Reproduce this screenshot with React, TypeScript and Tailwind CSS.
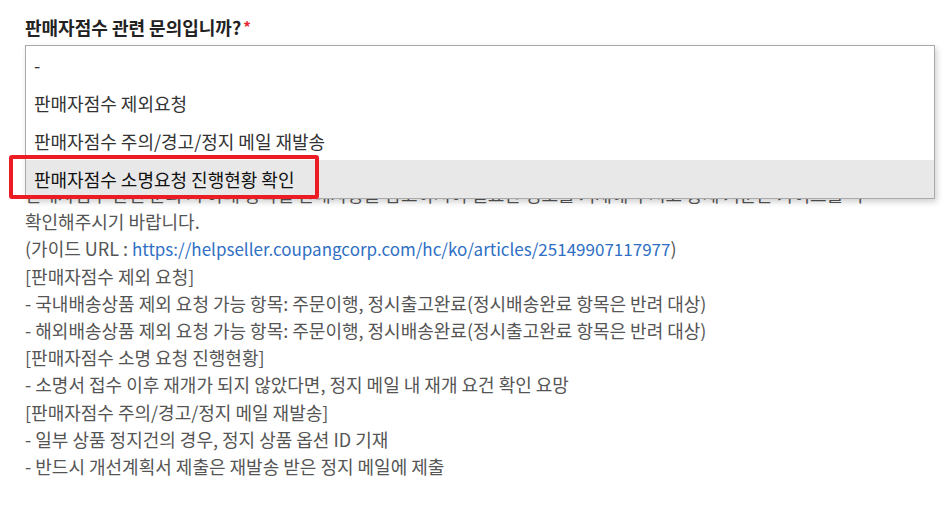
const OPTIONS = [
  "-",
  "판매자점수 제외요청",
  "판매자점수 주의/경고/정지 메일 재발송",
  "판매자점수 소명요청 진행현황 확인",
];

const LINES: { text: string; link?: string }[] = [
  { text: "(가이드 URL : ", link: "https://helpseller.coupangcorp.com/hc/ko/articles/25149907117977" },
  { text: "[판매자점수 제외 요청]" },
  { text: "- 국내배송상품 제외 요청 가능 항목: 주문이행, 정시출고완료(정시배송완료 항목은 반려 대상)" },
  { text: "- 해외배송상품 제외 요청 가능 항목: 주문이행, 정시배송완료(정시출고완료 항목은 반려 대상)" },
  { text: "[판매자점수 소명 요청 진행현황]" },
  { text: "- 소명서 접수 이후 재개가 되지 않았다면, 정지 메일 내 재개 요건 확인 요망" },
  { text: "[판매자점수 주의/경고/정지 메일 재발송]" },
  { text: "- 일부 상품 정지건의 경우, 정지 상품 옵션 ID 기재" },
  { text: "- 반드시 개선계획서 제출은 재발송 받은 정지 메일에 제출" },
];

export default function App() {
  const selected = 3;
  return (
    <div
      className="relative h-[505px] w-[951px] overflow-hidden bg-white px-[25px] pt-[14px]"
      style={{ fontFamily: '"Noto Sans CJK KR", "Noto Sans", sans-serif' }}
    >
      <div className="flex items-center text-[18px] font-bold leading-[26px] text-[#222]">
        판매자점수 관련 문의입니까?
        <span className="ml-[2px] text-[15px] text-[#e8262b]">*</span>
      </div>

      {/* help text, partly hidden behind the open menu */}
      <div className="mt-[141px] text-[18px] leading-[27.2px] text-[#555]">
        <p className="whitespace-nowrap">
          판매자점수 관련 문의 시 아래 항목별 안내사항을 참고하시어 필요한 정보를 기재해 주시고 상세 기준은 가이드를 꼭
        </p>
        <p>확인해주시기 바랍니다.</p>
        {LINES.map((l, i) => (
          <p key={i} className="whitespace-nowrap">
            {l.text}
            {l.link && (
              <>
                <a href="#" className="text-[17px] text-[#2f6fc4]">
                  {l.link}
                </a>
                )
              </>
            )}
          </p>
        ))}
      </div>

      {/* open select menu */}
      <div className="absolute left-[25px] top-[45px] w-[910px] border border-[#a9a9a9] bg-white shadow-[2px_3px_6px_rgba(0,0,0,0.18)]">
        {OPTIONS.map((o, i) => (
          <div
            key={o}
            className={`flex h-[38px] items-center pl-[8px] text-[18px] ${i === selected ? "bg-[#e8e8e8] text-[#111]" : "text-[#333]"}`}
          >
            {o}
          </div>
        ))}
      </div>

      {/* annotation box */}
      <div className="absolute left-[9px] top-[155px] h-[44px] w-[310px] rounded-[3px] border-[4px] border-[#ec1c24]" />
    </div>
  );
}
